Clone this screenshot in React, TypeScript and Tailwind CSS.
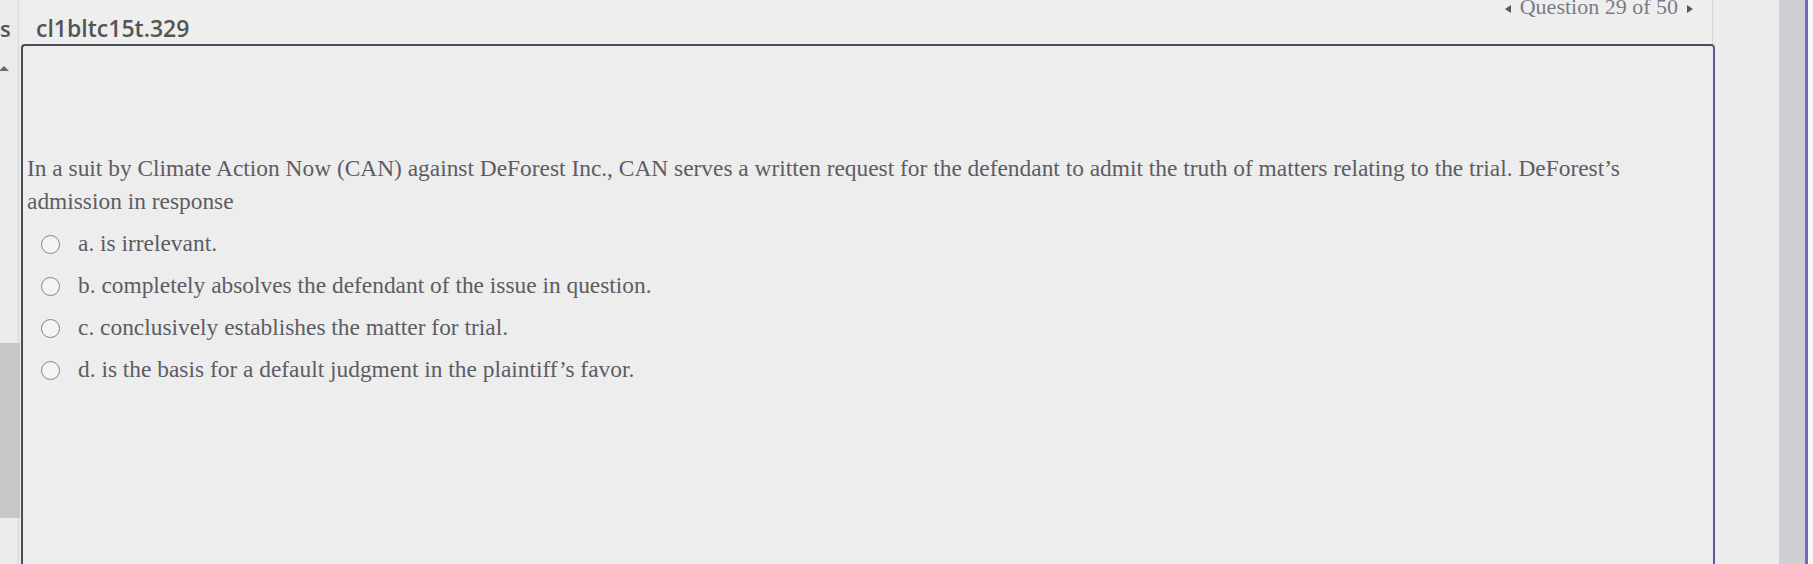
const options = [
  "a. is irrelevant.",
  "b. completely absolves the defendant of the issue in question.",
  "c. conclusively establishes the matter for trial.",
  "d. is the basis for a default judgment in the plaintiff\u2019s favor.",
];

const Radio = () => (
  <span className="w-[19px] h-[19px] rounded-full border-[1.5px] border-[#85858e] bg-[#f4f4f4] shrink-0" />
);

export default function App() {
  return (
    <div className="w-full h-[564px] overflow-hidden flex bg-[#ececec] text-[#5c5c64]">
      {/* left rail */}
      <div className="w-[19px] shrink-0 flex flex-col border-r border-[#d9d9d9] bg-[#ebebeb]">
        <div className="h-[44px] pt-[17px] font-['Open_Sans',sans-serif] font-semibold text-[22px] text-[#555] leading-none">
          s
        </div>
        <div className="mt-[22px] w-0 h-0 border-l-[5px] border-r-[5px] border-b-[5px] border-l-transparent border-r-transparent border-b-[#6a6a6a] -ml-[1px]" />
        <div className="mt-[272px] w-[20px] h-[175px] bg-[#c7c7c8]" />
      </div>

      {/* main */}
      <div className="flex-1 flex flex-col min-w-0">
        <div className="h-[44px] flex items-start justify-between pl-[17px] pr-[19px] bg-[#eeeeee] border-r border-[#d6d6d6] mr-[2px]">
          <span className="pt-[17px] font-['Open_Sans',sans-serif] font-semibold text-[23px] text-[#555] leading-none">
            cl1bltc15t.329
          </span>
          <div className="-mt-[4px] flex items-center gap-[9px] font-['Liberation_Serif',serif] text-[22px] leading-[22px] text-[#7b7b86]">
            <span className="w-0 h-0 border-t-[4px] border-b-[4px] border-r-[6px] border-t-transparent border-b-transparent border-r-[#55555c] mt-[4px]" />
            <span>Question 29 of 50</span>
            <span className="w-0 h-0 border-t-[4px] border-b-[4px] border-l-[6px] border-t-transparent border-b-transparent border-l-[#55555c] mt-[4px]" />
          </div>
        </div>

        <div className="flex-1 ml-[2px] border-2 border-b-0 border-[#4b4b5e] border-r-[#5a58a6] rounded-t-[4px] bg-[#ededed] pt-[106px] pl-[4px] font-['Liberation_Serif',serif] text-[23.4px] text-[#5c5c64]">
          <p className="leading-[33px] pr-[50px]">
            In a suit by Climate Action Now (CAN) against DeForest Inc., CAN serves a written request for the defendant to admit the truth of matters relating to the trial. DeForest’s admission in response
          </p>
          <div className="mt-[5px] flex flex-col">
            {options.map((o) => (
              <label key={o} className="h-[42px] flex items-center pl-[14px] gap-[18px]">
                <Radio />
                <span className="leading-none">{o}</span>
              </label>
            ))}
          </div>
        </div>
      </div>

      {/* right gutter */}
      <div className="w-[98px] shrink-0 flex">
        <div className="w-[64px] bg-[#ececec]" />
        <div className="w-[26px] bg-[#cfcfd3]" />
        <div className="w-[3px] bg-[#6d6cb8]" />
        <div className="flex-1 bg-[#f7f7f7]" />
      </div>
    </div>
  );
}
